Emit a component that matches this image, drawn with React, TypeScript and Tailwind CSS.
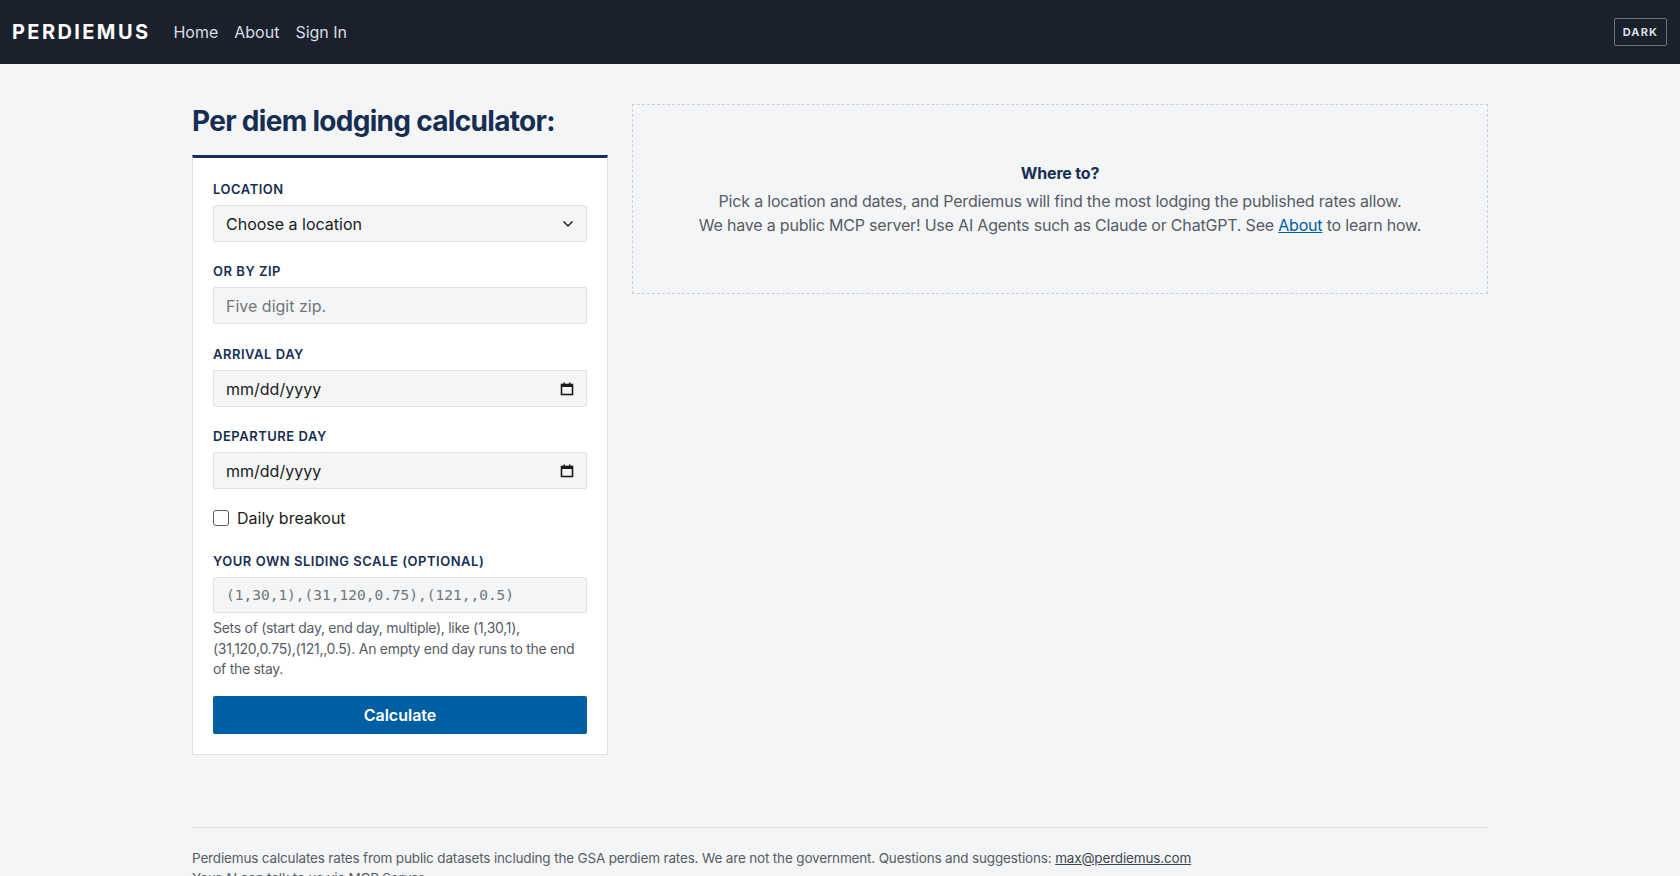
import React from "react";

const font = { fontFamily: '"Inter", "Noto Sans", sans-serif' };

function Label({ children }: { children: React.ReactNode }) {
  return (
    <label className="block text-[13px] leading-4 font-semibold tracking-[0.04em] text-[#162e51] mb-2">
      {children}
    </label>
  );
}

function CalIcon() {
  return (
    <svg width="14" height="14" viewBox="0 0 14 14" className="shrink-0">
      <rect x="1.5" y="2.5" width="11" height="10" fill="none" stroke="#1b1b1b" strokeWidth="1.6" />
      <rect x="1" y="2" width="12" height="3" fill="#1b1b1b" />
      <rect x="3.5" y="0.5" width="1.5" height="2.5" fill="#1b1b1b" />
      <rect x="9" y="0.5" width="1.5" height="2.5" fill="#1b1b1b" />
    </svg>
  );
}

export default function App() {
  return (
    <div className="min-h-screen bg-[#f4f5f7] text-[#1b1b1b]" style={font}>
      <header className="h-16 bg-[#1a202c] flex items-center justify-between pl-3 pr-[13px]">
        <div className="flex items-center">
          <span className="text-white font-bold text-[20px] tracking-[0.12em]">PERDIEMUS</span>
          <nav className="flex items-center gap-[16px] ml-[23px] text-[16px] text-[#d9dde3] -mt-[1px]">
            <a>Home</a>
            <a>About</a>
            <a>Sign In</a>
          </nav>
        </div>
        <button className="h-[28px] px-[8px] border border-[#6b7280] rounded-[2px] text-[11px] font-bold tracking-[0.1em] text-[#d9dde3]">
          DARK
        </button>
      </header>

      <main className="max-w-[1296px] mx-auto pt-[40px]">
        <div className="flex gap-6 items-start">
          <div className="w-[416px] shrink-0">
            <h1 className="text-[28px] leading-[36px] font-bold text-[#162e51] tracking-[-0.025em] mb-[16px] mt-[-1px]">
              Per diem lodging calculator:
            </h1>
            <div className="bg-white border border-[#dfe1e2] border-t-[3px] border-t-[#162e51] px-5 pt-[23px] pb-[20px]">
              <div className="mb-[21px]">
                <Label>LOCATION</Label>
                <div className="relative h-[37px] bg-[#f4f5f7] border border-[#dfe1e2] rounded-[2px] flex items-center justify-between pl-3 pr-3">
                  <span className="text-[16px]">Choose a location</span>
                  <svg width="12" height="8" viewBox="0 0 12 8">
                    <path d="M1.5 1.5 L6 6 L10.5 1.5" fill="none" stroke="#1b1b1b" strokeWidth="1.5" />
                  </svg>
                </div>
              </div>
              <div className="mb-[22px]">
                <Label>OR BY ZIP</Label>
                <input
                  placeholder="Five digit zip."
                  className="w-full h-[37px] bg-[#f4f5f7] border border-[#dfe1e2] rounded-[2px] px-3 text-[16px] placeholder:text-[#71767a] outline-none"
                />
              </div>
              <div className="mb-[21px]">
                <Label>ARRIVAL DAY</Label>
                <div className="h-[37px] bg-[#f4f5f7] border border-[#dfe1e2] rounded-[2px] px-3 flex items-center justify-between">
                  <span className="text-[16px]">mm/dd/yyyy</span>
                  <CalIcon />
                </div>
              </div>
              <div className="mb-[21px]">
                <Label>DEPARTURE DAY</Label>
                <div className="h-[37px] bg-[#f4f5f7] border border-[#dfe1e2] rounded-[2px] px-3 flex items-center justify-between">
                  <span className="text-[16px]">mm/dd/yyyy</span>
                  <CalIcon />
                </div>
              </div>
              <div className="flex items-center gap-2 h-4 mb-[27px]">
                <span className="w-4 h-4 rounded-[3px] border border-[#565c65] bg-white" />
                <span className="text-[16px] leading-4">Daily breakout</span>
              </div>
              <div>
                <Label>YOUR OWN SLIDING SCALE (OPTIONAL)</Label>
                <input
                  placeholder="(1,30,1),(31,120,0.75),(121,,0.5)"
                  className="w-full h-[36px] bg-[#f4f5f7] border border-[#dfe1e2] rounded-[2px] px-3 text-[14.5px] placeholder:text-[#71767a] outline-none"
                  style={{ fontFamily: '"DejaVu Sans Mono", monospace' }}
                />
                <p className="text-[14px] leading-[20.5px] tracking-[-0.02em] text-[#565c65] mt-[5px]">
                  Sets of (start day, end day, multiple), like (1,30,1),(31,120,0.75),(121,,0.5). An empty end day runs to the end of the stay.
                </p>
              </div>
              <button className="mt-[16px] w-full h-[38px] bg-[#005ea2] rounded-[2px] text-white font-semibold text-[16px]">
                Calculate
              </button>
            </div>
          </div>

          <div className="flex-1 h-[190px] border border-dashed border-[#d0d3d6] flex flex-col items-center justify-center text-center tracking-[-0.012em]">
            <div className="text-[16px] font-bold text-[#162e51] leading-6 mb-[4px]">Where to?</div>
            <div className="text-[16px] leading-6 text-[#565c65]">
              Pick a location and dates, and Perdiemus will find the most lodging the published rates allow.
            </div>
            <div className="text-[16px] leading-6 text-[#565c65]">
              We have a public MCP server! Use AI Agents such as Claude or ChatGPT. See{" "}
              <a className="text-[#005ea2] underline">About</a> to learn how.
            </div>
          </div>
        </div>

        <footer className="mt-[72px] border-t border-[#dfe1e2] pt-[20px] text-[13.5px] leading-[20px] tracking-[-0.012em] text-[#565c65]">
          <p>
            Perdiemus calculates rates from public datasets including the GSA perdiem rates. We are not the government. Questions and suggestions:{" "}
            <a className="underline text-[#3d4551]">max@perdiemus.com</a>
          </p>
          <p>Your AI can talk to us via MCP Server.</p>
        </footer>
      </main>
    </div>
  );
}
